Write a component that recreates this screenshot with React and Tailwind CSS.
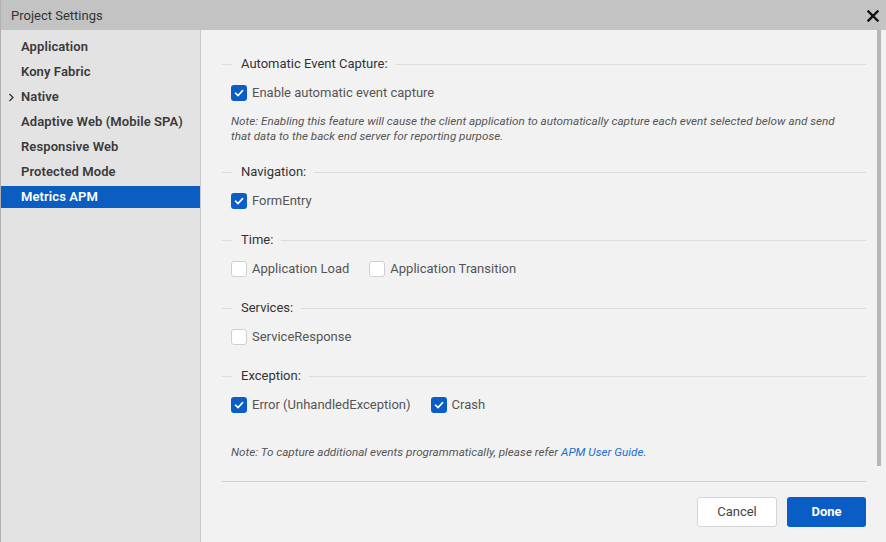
import React from "react";

const navItems = [
  { label: "Application" },
  { label: "Kony Fabric" },
  { label: "Native", chevron: true },
  { label: "Adaptive Web (Mobile SPA)" },
  { label: "Responsive Web" },
  { label: "Protected Mode" },
  { label: "Metrics APM", active: true },
];

function Checkbox({ checked, label }) {
  return (
    <label className="flex items-center gap-[5px] h-[16px]">
      {checked ? (
        <span className="w-[16px] h-[16px] rounded-[3px] bg-[#0b5dc6] flex items-center justify-center">
          <svg width="10" height="10" viewBox="0 0 10 10" fill="none">
            <path d="M1.5 5.2 L4 7.6 L8.6 2.6" stroke="white" strokeWidth="1.6" strokeLinecap="round" strokeLinejoin="round" />
          </svg>
        </span>
      ) : (
        <span className="w-[16px] h-[16px] rounded-[3px] bg-white border border-[#cfcfcf]" />
      )}
      <span className="text-[13px] text-[#555]">{label}</span>
    </label>
  );
}

function SectionHeader({ title, className = "" }) {
  return (
    <div className={`flex items-center h-[16px] ${className}`}>
      <div className="w-[10px] h-px bg-[#dcdcdc]" />
      <span className="ml-[9px] mr-[8px] text-[13px] text-[#333]">{title}</span>
      <div className="flex-1 h-px bg-[#dcdcdc]" />
    </div>
  );
}

function Section({ title, items, className }) {
  return (
    <div className={className}>
      <SectionHeader title={title} />
      <div className="mt-[13px] ml-[9px] flex gap-[20px]">
        {items.map((it) => (
          <Checkbox key={it.label} checked={it.checked} label={it.label} />
        ))}
      </div>
    </div>
  );
}

export default function App() {
  return (
    <div
      className="w-[886px] h-[542px] flex flex-col border-l border-[#b0b0b0] overflow-hidden"
      style={{ fontFamily: "Roboto, 'Liberation Sans', sans-serif" }}
    >
      {/* Title bar */}
      <div className="h-[30px] bg-[#c3c3c3] flex items-center justify-between pt-[2px] pl-[10px] pr-[7px]">
        <span className="text-[13px] text-[#333]">Project Settings</span>
        <svg width="12" height="12" viewBox="0 0 12 12">
          <path d="M1.5 1.5 L10.5 10.5 M10.5 1.5 L1.5 10.5" stroke="#111" strokeWidth="2.4" strokeLinecap="square" />
        </svg>
      </div>

      <div className="flex flex-1 min-h-0">
        {/* Sidebar */}
        <div className="w-[200px] bg-[#e3e3e3] border-r border-[#c9c9c9] pt-[6px] flex flex-col gap-[3px]">
          {navItems.map((item) => (
            <div
              key={item.label}
              className={`relative h-[22px] flex items-center pl-[20px] text-[13px] font-semibold tracking-[0.1px] ${
                item.active ? "bg-[#0b5dc2] text-white" : "text-[#3a3a3a]"
              }`}
            >
              {item.chevron && (
                <svg className="absolute left-[7px]" width="7" height="9" viewBox="0 0 7 9" fill="none">
                  <path d="M1.5 1 L5 4.5 L1.5 8" stroke="#333" strokeWidth="1.3" />
                </svg>
              )}
              {item.label}
            </div>
          ))}
        </div>

        {/* Main */}
        <div className="relative flex-1 bg-[#f2f2f2] pt-[26px] pl-[21px] pr-[20px] flex flex-col">
          <div className="absolute right-[5px] top-0 w-[4px] h-[436px] bg-[#b5b5b5]" />

          <SectionHeader title="Automatic Event Capture:" />
          <div className="mt-[13px] ml-[9px]">
            <Checkbox checked label="Enable automatic event capture" />
          </div>
          <p className="mt-[13px] ml-[9px] text-[11.7px] leading-[15px] italic text-[#555]">
            Note: Enabling this feature will cause the client application to automatically capture each event selected below and send
            <br />
            that data to the back end server for reporting purpose.
          </p>

          <Section className="mt-[20px]" title="Navigation:" items={[{ label: "FormEntry", checked: true }]} />
          <Section
            className="mt-[23px]"
            title="Time:"
            items={[{ label: "Application Load" }, { label: "Application Transition" }]}
          />
          <Section className="mt-[23px]" title="Services:" items={[{ label: "ServiceResponse" }]} />
          <Section
            className="mt-[23px]"
            title="Exception:"
            items={[
              { label: "Error (UnhandledException)", checked: true },
              { label: "Crash", checked: true },
            ]}
          />

          <p className="mt-[32px] ml-[9px] text-[11.7px] leading-[15px] italic text-[#555]">
            Note: To capture additional events programmatically, please refer{" "}
            <span className="text-[#1a6fd0]">APM User Guide</span>.
          </p>

          <div className="mt-[21px] h-px bg-[#cfcfcf]" />

          <div className="mt-[15px] flex justify-end gap-[10px]">
            <button className="w-[80px] h-[30px] rounded-[3px] bg-white border border-[#d6d6d6] text-[13px] text-[#444]">
              Cancel
            </button>
            <button className="w-[79px] h-[30px] rounded-[3px] bg-[#0b5dc6] text-[13px] font-bold text-white">
              Done
            </button>
          </div>
        </div>
      </div>
    </div>
  );
}
